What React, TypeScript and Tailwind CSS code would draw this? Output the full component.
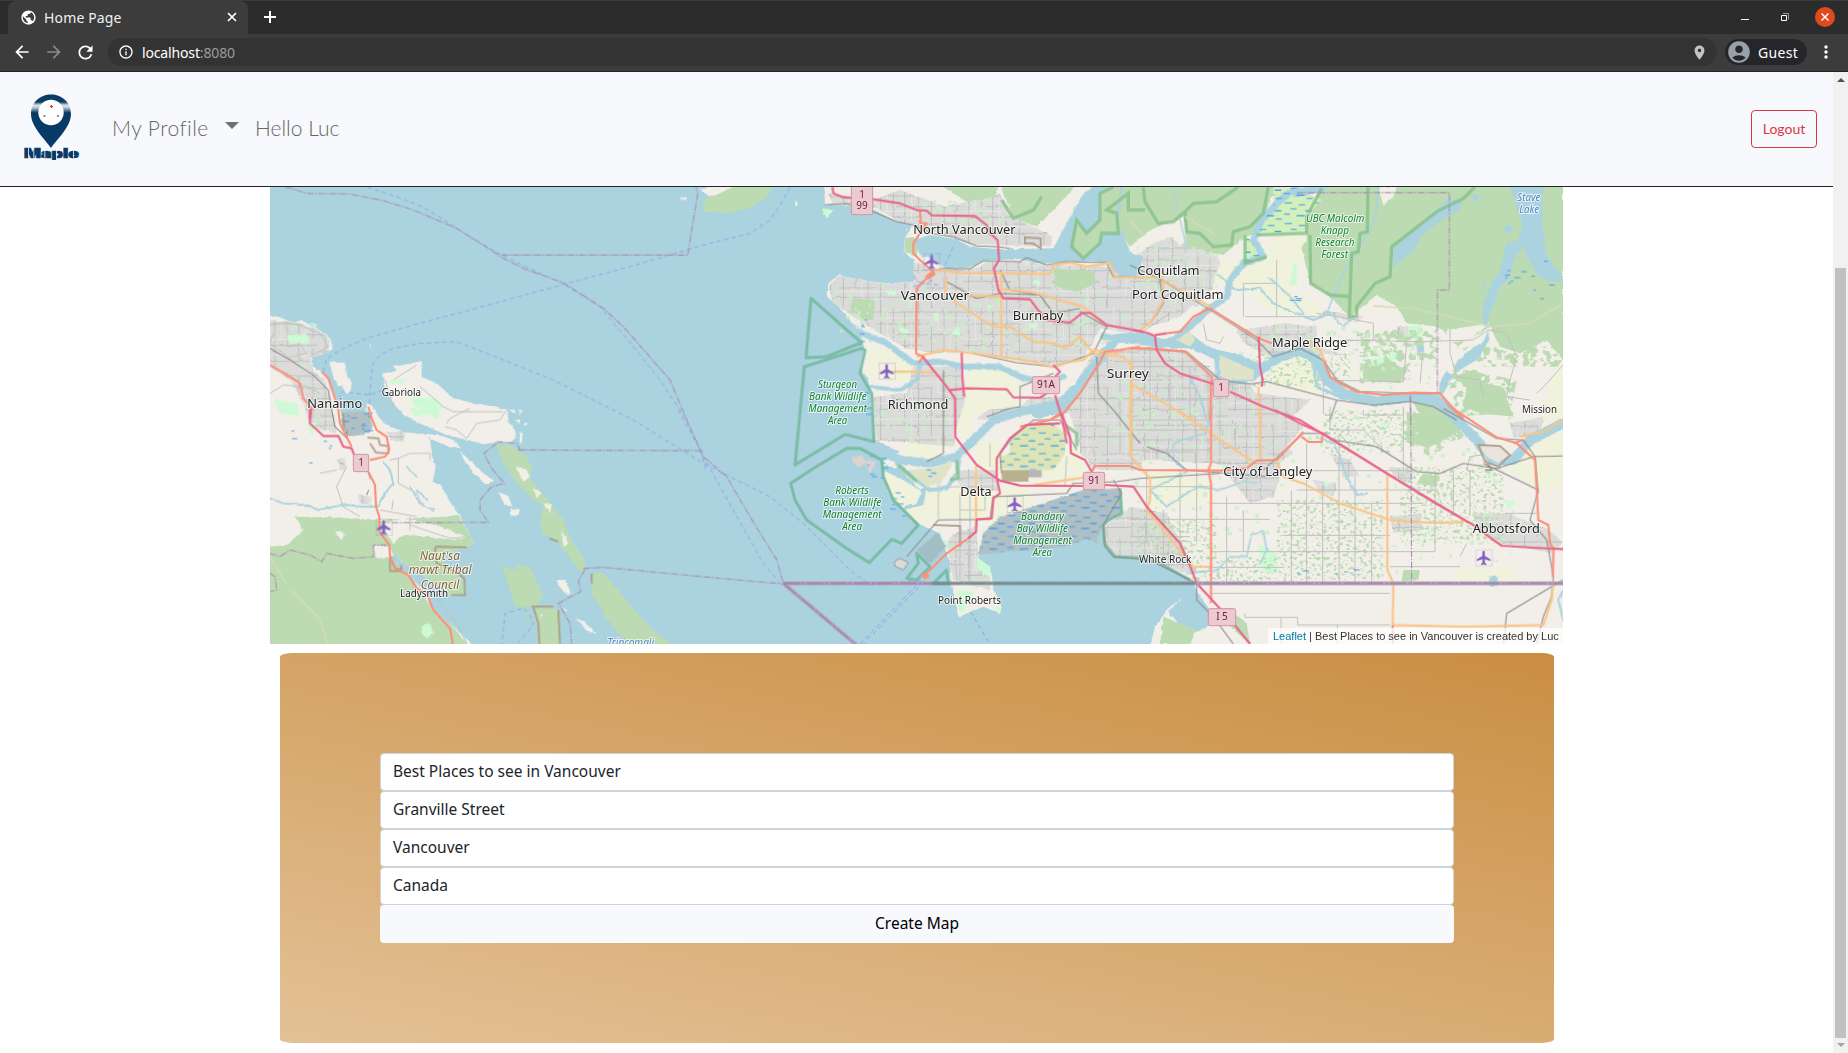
import React from "react";
import { MdFlight, MdLocationOn, MdAccountCircle, MdPublic, MdArrowBack, MdArrowForward, MdRefresh, MdInfoOutline, MdMoreVert } from "react-icons/md";

const WATER = "#aad3df";
const LAND = "#f2efe9";
const FOREST = "#bcdbb3";
const FARM = "#f0f2db";
const GRASS = "#cdfad5";
const MOTOR = "#e8678a";
const TRUNK = "#fb917b";
const PRIMARY = "#f9c586";
const BORDER = "#ab8faf";

type Tile = "A" | "B" | "C" | "D" | "E" | "F";
const ORIGIN: Record<Tile, [number, number]> = {
  A: [0, 0],
  B: [0, 690],
  C: [1290, 0],
  D: [1290, 690],
  E: [2580, 0],
  F: [2580, 690],
};

type Shape = [Tile, string];

function Paths({ items, ...rest }: { items: Shape[] } & React.SVGProps<SVGGElement>) {
  return (
    <g {...rest}>
      {items.map(([t, d], i) => (
        <path key={i} d={d} transform={`translate(${ORIGIN[t][0]} ${ORIGIN[t][1]})`} />
      ))}
    </g>
  );
}

const land: Shape[] = [
  ["B", "M-10 -288L30 -278L70 -262L95 -270L130 -250L160 -235L182 -215L188 -182L150 -165L125 -160L130 -130L155 -115L175 -90L190 -50L205 -20L215 10L215 50L235 78L285 72L310 50L300 20L290 0L290 -20L310 -10L325 20L350 45L400 66L460 72L480 90L487 140L497 168L488 215L515 228L540 275L570 320L595 365L612 400L590 412L530 430L520 460L560 490L585 520L587 555L550 560L510 535L470 500L430 480L400 460L375 432L365 445L400 480L430 510L470 550L490 600L540 640L615 710L-10 710Z"],
  ["A", "M178 545L225 548L232 590L245 610L240 640L225 640L215 615L205 620L190 590Z"],
  ["A", "M340 580L380 572L370 560L400 555L455 543L455 590L500 610L550 655L610 670L680 680L710 690L718 730L735 750L735 775L720 788L690 785L640 792L585 778L530 765L460 735L400 705L370 670L345 630Z"],
  ["B", "M455 75L500 72L550 90L572 115L540 112Z M568 122L600 150L640 190L672 212L650 222L615 195L585 155Z M685 245L715 258L727 290L705 285Z M722 295L748 297L745 315L722 318Z M750 65L758 70L755 102L748 95Z M860 510L885 510L903 552L885 550L865 525Z M915 620L940 635L980 670L950 662Z M880 592L895 605L885 603Z M735 30L750 28L748 40Z M758 40L772 38L768 48Z"],
  ["A", "M715 690L735 688L735 700Z M745 690L755 690L750 705Z M298 495L302 490L302 505Z M1230 52L1250 52L1248 60L1232 58Z"],
  ["C", "M372 15L375 75L420 72L470 75L520 90L580 120L640 130L615 175L610 215L640 240L650 280L640 305L560 310L480 300L415 285L385 310L380 345L420 385L450 420L480 455L492 500L480 560L505 600L515 690L525 780L600 815L550 845L548 880L565 940L610 990L660 1035L720 1060L750 1150L755 1210L775 1310L850 1280L900 1300L905 1280L880 1230L875 1180L835 1130L850 1060L900 1010L1000 980L1150 930L1260 930L1265 1000L1210 1030L1215 1090L1245 1130L1320 1135L1380 1150L1480 1205L1490 1235L1530 1290L1540 1330L1490 1355L1440 1335L1405 1295L1450 1250L1405 1285L1365 1340L1350 1400L2600 1400L2600 15Z"],
  ["C", "M0 30L40 15L110 15L105 45L30 50Z M285 65L290 62L290 78L284 82Z"],
];

const farm: Shape[] = [
  ["C", "M500 510L590 500L640 550L630 610L560 600L500 590Z M805 555L940 560L960 640L790 650Z M770 650L960 650L960 690L830 700L800 780L770 740Z"],
  ["D", "M545 160L600 170L700 230L830 230L890 250L870 330L720 325L660 345L600 290L565 250Z M830 100L900 90L910 210L830 160Z M1090 140L1120 110L1160 150L1140 200L1010 210L1030 170Z M900 230L980 230L1000 290L850 370L835 420Z M610 95L760 90L700 150L610 150Z"],
  ["E", "M250 240L345 250L400 210L440 170L530 170L515 240L480 330L600 400L560 410L440 400L340 330L240 300Z M270 510L380 560L370 600L280 600Z M430 560L540 520L580 600L560 640L430 610Z M0 640L60 620L200 700L0 720Z M1260 600L1299 550L1299 720L1230 720Z"],
  ["F", "M60 180L240 210L240 270L60 300Z M1130 170L1200 100L1299 60L1299 240L1220 240Z M980 480L1150 470L1160 510L990 510Z M130 60L200 60L200 120L130 130Z"],
];

const urban: Shape[] = [
  ["A", "M0 420L90 430L150 450L180 480L175 515L120 530L130 575L165 600L190 690L200 760L120 740L100 670L60 600L0 560Z"],
  ["B", "M265 255L305 260L300 285L270 280Z M350 65L405 65L400 95L360 90Z M205 145L225 145L225 180L210 180Z M400 520L450 540L520 640L490 640L440 580L400 545Z"],
  ["C", "M385 40L520 60L600 30L740 80L900 40L930 110L1000 140L1060 170L1050 200L900 195L800 190L700 155L600 125L530 85L400 75Z"],
  ["C", "M640 245L720 268L830 265L860 245L960 245L1050 255L1220 260L1300 290L1370 270L1420 230L1450 190L1500 170L1560 250L1530 330L1440 410L1290 460L1200 445L1180 490L1140 540L1060 555L930 535L800 515L700 520L620 505L520 450L400 370L385 320L415 288L560 312L645 305Z"],
  ["C", "M640 560L780 560L800 650L770 740L760 800L640 790L530 780L520 650L620 640Z"],
  ["C", "M1180 520L1250 510L1450 510L1560 590L1640 600L1680 660L1780 820L1690 880L1540 850L1330 840L1180 870L1140 800L1110 700L1030 700L830 720L860 690L960 680L1000 650L1100 650Z"],
  ["D", "M770 180L890 180L900 240L830 250L770 220Z M760 370L830 350L835 440L870 480L870 540L760 510L740 400Z M1215 350L1290 290L1400 310L1490 490L1420 480L1330 445L1245 440L1215 400Z"],
  ["D", "M1240 0L1290 30L1330 180L1200 180L1140 130L1140 30Z"],
  ["E", "M0 240L70 190L120 170L160 200L240 230L250 330L200 380L100 330L0 330Z"],
  ["E", "M320 450L400 440L460 430L560 440L680 460L700 530L560 520L480 500L420 530L340 490Z M580 390L700 410L660 450L560 440Z M800 440L860 440L850 480L800 485Z M300 630L540 660L480 720L300 720Z"],
  ["F", "M270 60L370 10L460 -10L520 50L450 130L450 200L430 260L360 280L290 190Z M600 130L660 150L690 200L640 200Z M780 170L850 180L840 220L790 200Z M780 320L870 310L880 360L790 370Z M1030 310L1130 310L1260 360L1299 400L1260 430L1120 400L1040 360Z M1140 40L1240 20L1230 80L1150 80Z M550 210L620 220L610 260L560 240Z"],
];

const forest: Shape[] = [
  ["B", "M-10 410L50 405L100 360L75 320L190 322L325 330L565 318L595 365L612 400L590 412L530 430L520 460L560 490L585 520L587 555L550 560L510 535L470 500L430 480L400 460L375 432L365 445L400 480L430 510L450 540L490 600L540 640L600 710L-10 710Z"],
  ["B", "M680 105L720 103L770 140L785 170L780 205L830 265L880 330L905 390L945 450L945 480L925 480L890 430L860 395L820 370L810 340L820 285L790 270L740 220L700 160Z M965 490L1000 490L1060 560L1110 620L1160 670L1210 710L1080 710L1020 640L965 550Z M695 465L740 482L740 458L780 475L820 560L800 590L735 592L720 540Z M785 590L850 590L870 610L872 710L805 710L800 640Z M765 590L785 625L775 630Z"],
  ["A", "M1300 95L1298 65L1325 45L1340 95Z"],
  ["C", "M10 60L60 40L110 15L225 15L200 50L150 85L90 100L20 95Z M615 175L640 170L655 190L650 230L612 215Z M1060 265L1180 275L1190 310L1130 335L1065 320Z M455 355L525 360L520 420L490 418L450 390Z M720 15L900 15L880 50L800 65Z M900 15L940 115L1010 140L1060 90L1130 15Z"],
  ["E", "M-120 15L-125 80L-175 130L-180 210L-110 235L-60 170L-30 160L0 200L60 150L160 110L170 200L280 225L345 170L380 160L430 40L430 15Z"],
  ["E", "M575 15L530 110L530 175L515 200L540 310L600 350L660 410L740 345L800 380L830 430L930 440L980 500L1080 440L1110 500L1170 520L1250 480L1299 540L1299 15Z"],
  ["E", "M700 550L780 540L830 570L810 610L700 600Z M960 590L1010 620L1000 680L1050 700L1150 710L1120 620L1060 610L1040 570Z M830 640L870 700L950 700L900 650Z"],
  ["F", "M830 10L950 10L1000 60L900 110L830 100Z M880 190L930 200L920 230L860 220Z M820 480L870 480L865 510L815 515Z M100 620L200 660L180 702L90 702Z M290 590L350 640L360 702L300 650Z"],
];

const clearings: Shape[] = [
  ["B", "M195 365L215 362L225 375L210 390Z M310 405L360 410L370 440L320 445Z M345 340L400 325L500 345L590 380L560 390L420 375L390 380L370 400L350 370Z M735 165L770 180L780 200L760 215Z M790 235L815 250L800 265Z M820 280L845 285L840 310Z M875 360L895 400L880 410Z M810 610L820 615L815 625Z"],
  ["E", "M745 21L800 21L790 50L760 75Z M560 400L690 430L760 440L700 540L560 500Z M950 450L1080 430L1010 485L950 485Z M560 315L590 335L570 350Z"],
];

const grass: Shape[] = [
  ["A", "M50 465L110 460L120 490L60 490Z M360 600L405 598L400 612L360 612Z M425 650L500 655L515 680L500 720L470 690L430 675Z M10 660L80 670L90 710L30 700Z M120 430L140 432L138 445Z"],
  ["B", "M455 645L480 640L490 670L470 685L455 670Z M420 -5L500 -5L500 30L480 10L430 20Z M110 40L140 35L125 80Z"],
  ["C", "M370 85L400 90L385 112L370 105Z M700 400L715 400L715 422L700 422Z M760 440L780 440L780 465L760 465Z M600 440L625 445L625 460L600 460Z M560 330L590 335L585 345L560 343Z M860 370L880 375L870 390Z M1000 300L1020 300L1020 315L1000 312Z M985 430L1015 430L1010 445L985 445Z"],
  ["E", "M835 438L875 436L875 480L830 480Z M700 540L770 530L820 500L800 540L720 560Z M490 250L500 250L500 315L480 315Z"],
  ["F", "M385 400L440 430L440 490L400 490Z M750 40L770 38L768 60L750 60Z M1060 190L1090 190L1080 210Z M1120 270L1160 270L1140 300Z M580 210L600 220L590 230Z"],
  ["D", "M830 440L870 470L875 510L850 490L830 470Z M720 370L745 400L735 400Z M775 540L820 545L815 565L775 560Z M770 560L800 575L790 612L776 600Z M880 590L905 592L895 612Z"],
];

const waterAreas: Shape[] = [
  ["C", "M640 180L690 165L770 178L810 200L900 208L1060 205L1110 110L1150 40L1190 15L1270 15L1255 130L1290 215L1330 230L1310 290L1260 290L1230 255L1180 243L1090 248L1000 250L960 237L900 240L850 240L810 262L740 268L700 240L660 225Z"],
  ["B", "M368 432L400 460L445 500L430 500L385 470Z"],
  ["E", "M790 200L850 150L900 110L950 60L1000 60L990 90L950 110L880 160L850 210L790 262Z"],
  ["E", "M1140 15L1240 15L1235 110L1250 230L1299 290L1290 310L1230 295L1190 230L1180 200L1150 240L1140 290L1110 320L1080 400L1072 440L1058 430L1060 370L1085 310L1110 270L1130 190L1165 180L1175 130Z M1125 135L1150 140L1145 160L1122 155Z M1060 300L1070 310L1060 335Z M1020 50L1048 40L1040 68Z M860 500L880 495L882 515L862 518Z M950 570L970 590L940 640L925 650L930 605Z M970 560L1010 515L1060 485L1075 450L1078 480L1040 540L980 575Z"],
  ["D", "M545 165L600 175L660 240L680 230L670 285L610 300L615 285L650 280L665 245L610 210L548 180Z"],
  ["F", "M1075 500L1105 500L1100 530L1080 530Z"],
];

const rivers: [Tile, string, number][] = [
  ["C", "M450 445L560 490L640 550L720 545L790 560L900 560L960 590L1040 610L1090 590", 18],
  ["C", "M500 620L600 630L650 600L660 550", 12],
  ["D", "M440 80L520 110L600 150L690 160L770 140L840 70L880 30L960 5L1080 -20L1120 -60", 26],
  ["D", "M590 160L650 210L690 240L740 235L770 190L780 140", 12],
  ["C", "M1010 700L1090 685L1120 640L1180 560L1250 475L1330 470L1380 490L1470 485", 28],
  ["E", "M-80 470L0 480L70 490L130 480L180 440L240 385L290 350L300 300L340 250L400 230L370 180L395 120L450 60L500 21", 20],
  ["E", "M130 490L180 490L260 525L330 540L390 570L450 530L510 512L560 540L590 600L650 645L740 665L840 650L920 660L970 710L1030 770L1090 840L1150 840L1200 780L1299 730", 30],
  ["E", "M180 470L260 530L265 590L300 610L370 595L390 570", 16],
  ["E", "M550 540L560 620L640 655", 10],
  ["E", "M500 40L580 21", 24],
  ["E", "M745 25L735 120L640 280L590 400", 5],
  ["E", "M265 285L320 330L390 325L430 370L500 400L550 420L600 400L640 440L670 410", 6],
  ["E", "M420 295L480 350L520 400", 6],
  ["E", "M130 21L140 80L165 180L165 220", 4],
  ["F", "M250 -10L225 70L130 100L130 150L170 185L60 240L110 290L200 230L270 240L340 215L380 220", 5],
  ["F", "M560 80L610 100L630 140L650 200L680 255L710 250", 6],
  ["F", "M170 490L260 480L300 440L350 440L365 370L400 365L410 420L390 460", 5],
  ["F", "M1299 540L1285 570L1299 630", 6],
  ["B", "M0 265L40 280L110 285L145 300L190 290L230 285L280 290L320 290L345 250L370 220L360 180L340 155", 6],
  ["B", "M420 230L450 280L490 300M440 240L470 270M410 170L440 200", 5],
  ["E", "M180 590L210 650L230 720", 6],
];

const islands: Shape[] = [
  ["D", "M630 180L720 170L750 150L755 170L720 220L680 230L650 205Z"],
  ["E", "M140 480L180 455L195 480L180 500Z M270 525L370 570L370 600L285 600L268 570Z"],
  ["C", "M1200 485L1240 478L1210 495Z"],
];

const parksOutline: Shape[] = [
  ["C", "M333 355L484 488L380 530L318 533Z"],
  ["C", "M484 505L440 520L313 560L285 855L435 763L522 785L515 640L480 580L495 510Z"],
  ["D", "M272 220L340 175L440 115L480 115L545 150L550 200L580 270L655 345L605 400L575 388L508 458L440 415L320 330L285 270Z"],
  ["D", "M650 430L655 460L620 505L650 510L690 470Z M700 520L740 480L745 520Z"],
  ["D", "M1260 235L1265 310L1225 330L1210 345L1213 400L1245 440L1320 444L1370 455L1470 510"],
];

const forestOutline: Shape[] = [
  ["C", "M905 60L940 115L1000 90L1025 50M1240 21L1200 40L1200 120L1160 160L1130 120L1115 200L1150 235L1200 190L1205 160L1255 160L1250 100L1220 90L1285 40L1285 90L1335 90"],
  ["E", "M40 21L45 65L85 130L130 125L165 95L190 70L260 65L325 21M165 95L170 155L210 160L250 200L305 195L310 155L360 140L400 100L415 21M345 165L345 250L410 230"],
  ["E", "M575 25L530 110L530 160L380 165M540 165L542 310L600 345L660 350L658 410L680 408L680 380L735 310L780 290L785 200L850 150L920 95L1000 55L1035 21M714 21L712 155L690 160L685 215L665 220L660 350"],
  ["D", "M770 150L775 205L750 210M595 165L650 215M1095 45L1130 70L1130 110"],
];

const wetland: Shape[] = [
  ["D", "M985 40L1050 35L1095 70L1095 130L1060 180L990 180L900 175L900 140L930 130L930 90Z"],
];
const marshland: Shape[] = [
  ["E", "M430 21L500 25L575 60L530 110L530 160L380 165L400 120L430 80Z M345 165L370 190L400 235L345 250Z"],
];
const mudflat: Shape[] = [
  ["D", "M850 370L900 320L1000 290L1150 240L1260 235L1265 310L1210 335L1190 400L1160 385L1100 410L835 432Z"],
];

const minor: Shape[] = [
  ["A", "M0 435L50 425L100 440L150 460L175 500L120 530M10 460L0 490L40 520L90 560M50 500L90 495L110 520L60 530M0 640L40 615L110 620L150 640M370 600L440 555M450 620L520 680L550 695L700 695M345 600L370 680"],
  ["B", "M530 40L540 25L600 -5M525 50L560 60L590 85L620 40L690 30L710 0M200 150L230 170L200 230L220 290L270 320M150 190L200 180M290 170L300 210M360 150L385 145L385 220M385 145L420 130L480 130L480 150M385 220L440 250L460 290M330 300L440 320M365 300L370 270M420 320L420 360M600 380L540 385L420 345M365 440L440 490L480 540L560 640L590 700"],
  ["E", "M0 480L60 440L120 400M340 410L340 310L440 310M440 240L440 410M345 410L560 410M220 430L230 480L270 490L280 470M560 400L620 410L680 420L730 430L730 480L560 485M640 480L860 485L1030 480L1075 450L1130 460L1160 530L1140 600L1130 650L1200 660M560 600L820 605L830 490M870 610L880 500M960 440L960 520L980 590L1050 600L1060 650M1299 555L1260 600L1220 640M580 600L580 700M1080 430L1110 450M0 720L240 720M0 560L240 560M0 600L100 600M0 660L240 660M60 510L60 720M120 560L120 720M180 560L180 720"],
  ["F", "M240 425L780 425M240 472L460 472M240 520L500 520M240 328L420 328M440 182L850 182M500 240L920 240M240 280L640 280L880 280M460 376L780 376M780 425L915 425L915 180M780 470L990 470M990 440L1010 400M484 240L484 520M530 100L530 520M578 230L578 520M627 70L627 520M675 200L675 520M725 280L725 520M820 -10L820 180M600 -10L600 60L700 60L770 130M700 0L700 15L820 15M1020 180L1020 310M970 310L970 180M240 550L780 550M345 610L345 622L503 622L503 645L780 645M622 645L622 702M453 622L453 702M1090 130L1020 140L1010 180M1125 310L1220 310M200 60L200 400M0 60L240 60M0 120L240 120M0 230L240 230M0 328L240 328M50 180L50 400M100 300L100 440M150 180L150 440M0 380L180 380M290 260L290 520M340 300L340 425"],
  ["D", "M715 325L715 180M720 230L880 230M780 250L780 510M810 250L810 520M855 240L855 300L780 300M770 370L830 370M760 420L830 420M870 100L870 170M1100 140L1095 230"],
];

const rail: Shape[] = [
  ["A", "M0 505L60 540L130 585L175 630L185 690"],
  ["B", "M185 0L195 50L232 85L230 60M290 255L296 240"],
  ["C", "M375 75L440 70L520 95L590 125L640 135L700 162L760 170L830 198L890 200L930 205M720 265L810 266L850 242L960 245L980 233L1040 255L1100 245L1220 248L1240 290L1330 292M900 270L930 330L1020 345L1060 400L1140 385M740 305L830 355L900 340L1020 345M1140 395L1220 440L1180 520L1110 545L1060 560L950 548L820 520M860 710L930 685L960 680L960 620L1060 580M1190 530L1195 640L1240 690L1320 790M730 570L730 820L680 845M1340 800L1400 820L1460 870L1700 890"],
  ["D", "M620 440L715 330L870 328L880 260L1100 250L1120 220L1250 215L1320 205L1560 190M905 190L900 130L940 80L1000 30L1080 30L1130 120M1240 210L1265 250L1210 345L1215 410L1240 440L1320 447L1370 460L1490 520L1490 570L1540 620L1600 702"],
  ["E", "M0 255L105 305L240 390L380 480L430 530L510 505L580 540L620 600L690 635L840 640L930 640L1000 715M0 505L170 515L270 600L360 612L410 605L620 660L730 675L840 665L910 680L980 720M620 660L600 720M90 300L100 370L60 430"],
  ["F", "M400 180L520 70L600 70M610 90L740 110L860 185L930 190L1000 160L1100 175L1210 140L1299 138M1060 160L1225 240L1200 330L1250 390L1270 500L1265 560L1240 620L1220 702M940 -5L1100 85L1180 90L1215 140L1225 250M1299 510L1130 610L1120 702"],
];

const primary: Shape[] = [
  ["C", "M700 270L780 278L1050 282L1060 255L1110 248L1160 260L1230 248L1245 292L1390 292M903 275L903 530M905 328L990 335L1060 355L1150 380L1220 435M740 290L735 340L900 350M760 362L880 440L930 440L1000 485L1060 490L1095 505L1140 470L1180 520L1270 530L1295 560L1292 830M575 575L640 575L700 578M650 530L730 510L820 520L900 530L1000 545L1060 562L1110 545L1150 540L1180 510L1255 520"],
  ["D", "M828 170L828 350M1000 225L1100 210L1150 203M1292 0L1292 140L1350 205L1350 270L1340 300L1480 470L1530 470"],
  ["E", "M5 540L0 720M0 610L190 720M240 380L100 300L100 360L60 430L30 450M540 490L570 510L585 545M385 620L390 720"],
  ["F", "M140 0L240 70L370 155M390 0L390 150M440 155L460 200L520 220L630 280L780 330L900 338L1000 337M772 190L772 480L790 520L788 645L1000 650L1240 645L1265 570L1270 510M1299 30L1240 65L1170 80"],
];

const trunk: Shape[] = [
  ["A", "M0 555L60 590L90 610L100 655L125 685L120 715M155 575L175 595L190 640L205 690M295 680L305 720"],
  ["B", "M205 0L210 40L232 85L245 110M305 25L320 60L350 80L358 120L345 140L300 150M295 185L315 225L318 290L328 320L328 365L358 405L360 440L375 475L415 495L440 535L470 550L490 600L540 655L550 710"],
  ["C", "M660 90L662 130L680 130L640 190L640 220L660 240L700 275L650 325L648 520L670 530L655 550"],
  ["D", "M805 385L740 430L670 500M1175 185L1185 168L1290 168M960 50L1050 30L1080 10"],
  ["C", "M1320 500L1260 510L1215 515L1200 545L1140 640L1090 700L1060 715"],
  ["E", "M240 720L245 590L165 515L60 505L0 505M110 460L150 455L190 410L240 385L385 475L425 490M580 540L600 590L630 610L680 635L760 645L850 638L930 640L960 680L1000 715"],
  ["F", "M243 -90L243 160L235 180L243 220L243 580M0 168L30 180L270 182L350 175L380 152L440 150L520 65M515 80L535 96L575 96L578 70M960 -10L1100 82L1160 100L1215 150L1225 330L1255 345L1260 400L1270 415L1268 500M788 645L788 702M1150 100L1180 90"],
];

const motor: Shape[] = [
  ["A", "M122 685L120 715"],
  ["B", "M120 0L120 40L160 78L205 78L220 110L245 115L252 135"],
  ["C", "M398 21L400 40L430 52L520 58L600 70L650 90L680 92L695 106L825 108L860 135L870 160L893 180L897 240L882 265L895 330L910 355L990 358L1010 385L1040 420L1110 428L1145 400L1170 398L1220 435L1330 455M785 518L787 590L792 650M668 530L740 620L765 655L766 770M750 630L800 625L920 628L940 652L1020 653L1040 640M1060 555L1080 575L1065 590M1065 645L1088 720L1100 790"],
  ["D", "M765 80L830 165L900 212L960 227L1150 228M1215 225L1300 230L1340 290L1440 400L1475 480L1490 520L1600 640L1650 702M1085 10L1110 80L1113 130L1155 150L1175 185M1080 40L980 45L930 85L890 145L890 205L900 250L880 265L875 325L830 328L828 365L805 385"],
  ["E", "M10 450L50 458L75 468L80 510L105 550L150 580L250 612M75 465L110 460M300 635L400 680L510 720L770 880L1020 1030M386 470L390 560L398 600L395 620"],
  ["F", "M435 0L520 45L578 70L770 190L900 270L1030 345L1070 375L1115 407L1210 413L1299 417"],
];

const ferry: Shape[] = [
  ["A", "M292 22L380 50L460 82L520 118L600 172L700 228L800 275L880 312L990 380L1010 405L1090 500L1170 600L1210 660L1250 720L1300 830L1440 1080L1480 1150L1530 1210M160 575L170 535L220 505L290 475L430 435L600 390L800 335L930 300L1080 260L1250 210L1320 190L1440 160L1500 120L1540 60L1560 21M298 670L302 600L310 550L330 525L370 505L450 490L560 485L650 520L850 600L1090 720L1300 850L1500 950L1600 1030L1740 1170L1800 1215L1950 1200M200 680L215 635L300 645L340 630"],
  ["B", "M1225 0L1290 120L1310 185M695 710L705 610L760 595L775 610L790 640L770 670L740 702"],
  ["D", "M665 510L480 702M672 515L490 702M812 605L865 695"],
  ["C", "M735 255L765 190M640 290L660 310L720 315M640 320L700 300"],
];

const boundary: Shape[] = [
  ["A", "M48 21L110 40L240 42L340 62L430 90L560 145L640 195L700 235L760 265L880 308L1000 385L1060 440L1130 520L1200 600L1250 720L1300 830L1370 890L1440 1010L1520 1140L1540 1210M695 225L1253 225L1283 40L1278 21"],
  ["B", "M745 120L1300 122M680 95L740 100L750 120M680 100L642 130L665 175L703 220L665 230L630 270L630 300L655 337L360 338M940 475L1000 472L1320 502L1540 522M945 478L925 515L932 545L865 580L900 640L905 700M0 430L30 440L60 420L120 435L155 455L170 430L250 445L310 440L310 405L355 405M0 490L15 500L20 540L0 545"],
  ["E", "M500 38L958 38L958 330L922 330L922 640M840 645L842 720"],
  ["F", "M842 -40L845 520"],
];

const reserves: Shape[] = [
  ["B", "M495 410L590 412M495 412L500 460L550 480L583 505L585 555L545 555M360 438L375 475L395 480L393 465M360 440L360 483L395 483M292 83L325 85L330 105L355 108L355 130L318 128L300 100M785 590L850 590M790 592L805 640L808 702M865 600L870 702M965 490L965 520M220 10L222 60M838 385L865 395"],
  ["C", "M975 172L1022 175L1022 205L1000 190L975 190Z"],
  ["F", "M1045 105L1110 108L1140 135L1105 170L1065 155Z M1065 150L1085 180L1065 180"],
  ["D", "M700 345L780 348L780 410"],
];

function seq(seed: number) {
  let s = seed;
  return () => {
    s = (s * 16807) % 2147483647;
    return s / 2147483647;
  };
}

const dashes = (() => {
  const r = seq(41);
  const boxes: [Tile, number, number, number, number, number][] = [
    ["B", 218, 8, 80, 65, 14],
    ["E", 475, 290, 30, 80, 5],
    ["E", 1120, 200, 150, 160, 12],
    ["B", 60, 60, 130, 110, 6],
    ["C", 455, 410, 40, 100, 6],
    ["C", 495, 600, 20, 110, 7],
    ["D", 500, 130, 50, 90, 8],
    ["D", 560, 240, 50, 80, 7],
    ["F", 500, 480, 180, 12, 6],
    ["D", 610, 170, 90, 30, 4],
  ];
  return boxes.flatMap(([t, x, y, w, h, n]) =>
    Array.from({ length: n }, () => {
      const dx = x + r() * w;
      const dy = y + r() * h;
      return [t, `M${dx.toFixed(0)} ${dy.toFixed(0)}h${(6 + r() * 14).toFixed(0)}`] as Shape;
    })
  );
})();

const speckles = (() => {
  const r = seq(977);
  const zones: [Tile, number, number, number, number, number][] = [
    ["C", 420, 340, 740, 160, 130],
    ["C", 540, 650, 200, 130, 40],
    ["C", 1200, 560, 370, 280, 110],
    ["C", 600, 60, 320, 90, 60],
    ["E", 20, 190, 240, 150, 50],
    ["E", 320, 430, 380, 90, 40],
    ["F", 0, 0, 460, 400, 110],
    ["F", 460, 10, 700, 470, 80],
    ["E", 700, 440, 220, 180, 30],
  ];
  return zones.flatMap(([t, x, y, w, h, n]) =>
    Array.from({ length: n }, () => {
      const a = 4 + r() * 10;
      const b = 4 + r() * 10;
      return [t, `M${(x + r() * w).toFixed(0)} ${(y + r() * h).toFixed(0)}h${a.toFixed(0)}v${b.toFixed(0)}h-${a.toFixed(0)}z`] as Shape;
    })
  );
})();

type Label = [Tile, string, number, number, number, number];
const towns: Label[] = [
  ["A", "Nanaimo", 112, 277, 685, 40],
  ["A", "Gabriola", 335, 453, 648, 30],
  ["B", "Ladysmith", 390, 534, 560, 30],
  ["C", "North Vancouver", 640, 947, 161, 40],
  ["C", "Vancouver", 602, 808, 361, 40],
  ["C", "Burnaby", 938, 1090, 420, 40],
  ["C", "Richmond", 563, 745, 688, 40],
  ["C", "Surrey", 1220, 1347, 595, 40],
  ["D", "Delta", 781, 875, 259, 40],
  ["D", "Point Roberts", 714, 903, 583, 30],
  ["E", "Coquitlam", 22, 209, 284, 40],
  ["E", "Port Coquitlam", 6, 281, 357, 40],
  ["E", "Maple Ridge", 426, 652, 500, 40],
  ["E", "Mission", 1176, 1281, 698, 30],
  ["F", "City of Langley", 280, 547, 197, 40],
  ["F", "White Rock", 27, 184, 460, 30],
  ["F", "Abbotsford", 1028, 1230, 369, 40],
];
const reservesNames: Label[] = [
  ["C", "Sturgeon", 354, 471, 623, 30],
  ["C", "Bank Wildlife", 327, 500, 659, 30],
  ["C", "Management", 325, 501, 695, 30],
  ["C", "Area", 384, 442, 731, 30],
  ["D", "Roberts", 406, 506, 251, 30],
  ["D", "Bank Wildlife", 370, 544, 287, 30],
  ["D", "Management", 368, 545, 323, 30],
  ["D", "Area", 427, 486, 359, 30],
  ["D", "Boundary", 963, 1092, 329, 30],
  ["D", "Bay Wildlife", 950, 1104, 365, 30],
  ["D", "Management", 940, 1115, 401, 30],
  ["D", "Area", 998, 1056, 437, 30],
  ["E", "UBC Malcolm", 528, 703, 127, 30],
  ["E", "Knapp", 572, 657, 163, 30],
  ["E", "Research", 556, 673, 199, 30],
  ["E", "Forest", 574, 654, 235, 30],
];
const waterNames: Label[] = [
  ["E", "Stave", 1162, 1231, 63, 30],
  ["E", "Lake", 1168, 1227, 98, 30],
  ["B", "Trincomali", 1012, 1152, 707, 30],
];
const tribal: Label[] = [
  ["B", "Naut'sa", 449, 570, 450, 36],
  ["B", "mawt Tribal", 416, 605, 493, 36],
  ["B", "Council", 452, 568, 536, 36],
];

function Labels({ items, fill, italic }: { items: Label[]; fill: string; italic?: boolean }) {
  return (
    <g fill={fill} stroke="#ffffff" strokeOpacity=".7" strokeWidth="6" strokeLinejoin="round" fontFamily='"Noto Sans", sans-serif' fontStyle={italic ? "italic" : "normal"} style={{ paintOrder: "stroke" }}>
      {items.map(([t, s, x1, x2, y, size], i) => (
        <text key={i} x={ORIGIN[t][0] + x1} y={ORIGIN[t][1] + y} textLength={x2 - x1} lengthAdjust="spacingAndGlyphs" fontSize={size}>
          {s}
        </text>
      ))}
    </g>
  );
}

const shields: [Tile, number, number, number, number, string[]][] = [
  ["B", 250, 133, 46, 52, ["1"]],
  ["C", 454, 8, 64, 96, ["1", "99"]],
  ["C", 997, 590, 82, 51, ["91A"]],
  ["D", 1150, 187, 64, 52, ["91"]],
  ["E", 250, 598, 46, 52, ["1"]],
  ["F", 235, 596, 82, 51, ["I 5"]],
];

const airports: [Tile, number, number][] = [
  ["C", 696, 245],
  ["C", 561, 574],
  ["B", 342, 352],
  ["D", 945, 283],
  ["F", 1062, 444],
];

function MapView() {
  return (
    <svg className="block h-full w-full" viewBox="0 21 3879 1371" preserveAspectRatio="none">
      <defs>
        <pattern id="streets" width="264" height="192" patternUnits="userSpaceOnUse">
          <rect width="264" height="192" fill="#dbdbda" />
          <path d="M0 12H264M0 48H170M60 80H264M0 112H140M150 132H264M0 160H264M14 0V192M52 0V112M86 12V160M128 0V90M128 120V192M166 48V192M204 0V132M240 12V192" fill="none" stroke="#bdbdbd" strokeWidth="2.8" />
          <path d="M0 30H264M0 94H120M180 64H264M0 142H264M34 12V94M106 48V192M186 0V64M222 80V160" fill="none" stroke="#e9e9e9" strokeWidth="2.4" />
          <path d="M64 52h14v11h-14zM14 118h14v10h-14zM210 20h12v14h-12zM140 140h16v9h-16zM172 90h10v12h-10zM92 166h12v12h-12z" fill="#cbeccb" />
        </pattern>
        <pattern id="marsh" width="92" height="62" patternUnits="userSpaceOnUse">
          <path d="M4 6.500h22M46 12.500h20M22 24.500h18M66 30.500h20M2 40.500h18M40 45.500h24M70 55.500h18" stroke="#3496f5" strokeWidth="3.4" />
        </pattern>
        <filter id="rough" x="-2%" y="-2%" width="104%" height="104%">
          <feTurbulence type="fractalNoise" baseFrequency=".06" numOctaves="3" seed="4" result="n" />
          <feDisplacementMap in="SourceGraphic" in2="n" scale="9" xChannelSelector="R" yChannelSelector="G" />
        </filter>
        <filter id="woods" x="0" y="0" width="100%" height="100%">
          <feTurbulence type="fractalNoise" baseFrequency=".1" numOctaves="4" seed="23" result="n" />
          <feColorMatrix in="n" type="matrix" values="0 0 0 0 0  0 0 0 0 0  0 0 0 0 0  0 20 0 0 -11.6" result="m" />
          <feComposite in="SourceGraphic" in2="m" operator="in" />
        </filter>
        <filter id="woodsDense" x="0" y="0" width="100%" height="100%">
          <feTurbulence type="fractalNoise" baseFrequency=".05" numOctaves="4" seed="8" result="n" />
          <feColorMatrix in="n" type="matrix" values="0 0 0 0 0  0 0 0 0 0  0 0 0 0 0  0 24 0 0 -11.9" result="m" />
          <feComposite in="SourceGraphic" in2="m" operator="in" />
        </filter>
      </defs>
      <rect y="0" width="3880" height="1400" fill={WATER} />
      <g filter="url(#rough)">
        <Paths items={land} fill={LAND} />
        <Paths items={farm} fill={FARM} />
        <Paths items={urban} fill="url(#streets)" />
        <Paths items={forest} fill={FOREST} />
        <Paths items={clearings} fill={LAND} />
        <Paths items={grass} fill={GRASS} />
      </g>
      <g fill={FOREST} filter="url(#woodsDense)">
        <path d="M3270 530H3420V610H3270Z M3400 690L3560 690L3600 760L3480 830L3400 780Z M3540 560L3740 600L3720 700L3540 710Z M3260 450H3500V540H3260Z M3560 500H3879V560H3640Z" />
      </g>
      <g fill={FOREST} filter="url(#woods)">
        <path d="M3020 960H3340V1200H3020Z M3390 860H3700V1090H3390Z M2760 1130H3080V1210H2760Z M2940 520H3240V620H2940Z M2600 1020H2840V1140H2600Z M3160 690H3400V820H3160Z" />
      </g>
      <Paths items={speckles} fill="#cbeec8" opacity=".9" />
      <Paths items={minor} fill="none" stroke="#c0c0c1" strokeWidth="3" />
      <Paths items={wetland} fill="#dbe4af" opacity=".9" />
      <Paths items={marshland} fill="#d3efbb" />
      <Paths items={[["D", "M905 180H985V215H905Z"]]} fill="#b9b18d" />
      <Paths items={[["D", "M985 180H1025V202H985Z"]]} fill="#b6b6b2" />
      <g filter="url(#rough)">
        <Paths items={waterAreas} fill={WATER} />
        <g fill="none" stroke={WATER} strokeLinejoin="round" strokeLinecap="round">
          {rivers.map(([t, d, w], i) => (
            <path key={i} d={d} strokeWidth={w} transform={`translate(${ORIGIN[t][0]} ${ORIGIN[t][1]})`} />
          ))}
        </g>
        <Paths items={[["C", "M1115 200L1130 120L1160 160L1200 120L1200 40L1240 15L1262 20L1250 100L1255 160L1205 162L1200 190L1150 235Z"]]} fill={FOREST} />
        <Paths items={islands} fill="#dfe3c8" />
        <Paths items={[...mudflat, ["B", "M213 5L280 5L300 20L305 60L280 75L235 78L218 50Z"]]} fill="#b0bfc3" />
        <Paths items={[["D", "M455 140L485 138L500 155L480 172L460 160Z M500 152L530 155L510 190L498 170Z"]]} fill="#ddd2cf" />
        <Paths items={[["F", "M1045 105L1110 108L1140 135L1105 160L1070 140Z"]]} fill="#eae3db" />
        <Paths items={[["D", "M650 420L710 370L740 410L690 460Z"]]} fill="#a2bdc4" />
      </g>
      <Paths items={[...mudflat, ...wetland, ...marshland]} fill="url(#marsh)" />
      <Paths items={dashes} stroke="#4b9fec" strokeWidth="3" />
      <Paths items={forestOutline} fill="none" stroke="#86c08a" strokeWidth="10" opacity=".8" />
      <Paths items={parksOutline} fill="none" stroke="#76b9a0" strokeWidth="9" strokeLinejoin="round" opacity=".9" />
      <Paths items={reserves} fill="none" stroke="#a99282" strokeWidth="6" opacity=".8" />
      <Paths items={[["B", "M0 440L50 525M65 540L150 630L172 702"], ["E", "M165 110L250 160M0 120L40 165M730 378L850 385L1000 420L1080 440L1200 430L1299 370"]]} fill="none" stroke="#d3ddb2" strokeWidth="5" />
      <Paths items={rail} fill="none" stroke="#8a8a8a" strokeWidth="3.2" strokeLinejoin="round" />
      <Paths items={primary} fill="none" stroke={PRIMARY} strokeWidth="6.5" strokeLinejoin="round" />
      <Paths items={trunk} fill="none" stroke={TRUNK} strokeWidth="6.5" strokeLinejoin="round" />
      <Paths items={motor} fill="none" stroke={MOTOR} strokeWidth="6.5" strokeLinejoin="round" />
      <Paths items={[["D", "M662 495L680 490L688 498L675 508Z"], ["C", "M675 290L700 272L706 284L685 298Z"]]} fill={TRUNK} stroke={TRUNK} strokeWidth="3" />
      <Paths items={[["D", "M583 455L600 445L625 458L610 480L585 468Z"]]} fill="#dcdad9" stroke="#8d8d8d" strokeWidth="2.5" />
      <Paths items={ferry} fill="none" stroke="#8ba4ea" strokeWidth="3" strokeDasharray="13 10" />
      <Paths items={boundary} fill="none" stroke={BORDER} strokeWidth="3.4" strokeDasharray="20 4 5 4" />
      <g fill="none">
        <path d="M1540 1210H1985M2775 1210H3880M1540 1210L1765 1400" stroke="#b49bbd" strokeWidth="12" opacity=".9" />
        <path d="M1985 1210H2775" stroke="#6f9089" strokeWidth="11" opacity=".85" />
        <path d="M1540 1210H3880M1540 1210L1765 1400" stroke="#8f7197" strokeWidth="3" strokeDasharray="50 6 8 6" />
      </g>
      {airports.map(([t, x, y], i) => (
        <MdFlight key={i} x={ORIGIN[t][0] + x - 25} y={ORIGIN[t][1] + y - 25} size={50} color="#8461c4" stroke="#8461c4" strokeWidth=".6" />
      ))}
      <Labels items={towns} fill="#222222" />
      <Labels items={reservesNames} fill="#128030" italic />
      <Labels items={waterNames} fill="#5083c0" italic />
      <Labels items={tribal} fill="#80633c" italic />
      {shields.map(([t, x, y, w, h, lines], i) => (
        <g key={i} transform={`translate(${ORIGIN[t][0] + x} ${ORIGIN[t][1] + y})`} fontFamily='"Noto Sans", sans-serif' fontSize="30" fill="#6d1c3b" textAnchor="middle">
          <rect width={w} height={h} rx="5" fill="#ebcad1" stroke="#d294a2" strokeWidth="3" />
          {lines.map((l, k) => (
            <text key={k} x={w / 2} y={(lines.length === 1 ? h / 2 : 35 + k * 35) + 10}>
              {l}
            </text>
          ))}
        </g>
      ))}
    </svg>
  );
}

function Logo() {
  return (
    <svg className="mt-[-2px] h-[66px] w-[57px]" viewBox="0 0 57 66">
      <defs>
        <linearGradient id="pin" x1="0" y1="0" x2="0" y2="1">
          <stop offset="0" stopColor="#073a63" />
          <stop offset=".14" stopColor="#0d4068" />
          <stop offset=".2" stopColor="#d9e2ea" />
          <stop offset=".24" stopColor="#c3cfdb" />
          <stop offset=".34" stopColor="#073a66" />
          <stop offset="1" stopColor="#073a66" />
        </linearGradient>
      </defs>
      <path d="M28 .5C17 .5 8 8.5 8 20C8 33 22 45 28 54C34 45 48 33 48 20C48 8.500 39 .5 28 .5Z" fill="url(#pin)" />
      <circle cx="28" cy="18.500" r="12.700" fill="#fff" />
      <path d="M27 12.500h3M28.500 11v3" stroke="#e02535" strokeWidth="1.200" />
      <circle cx="21.500" cy="22" r="1.100" fill="#777" />
      <circle cx="35" cy="22" r="1.100" fill="#777" />
      <text x="1" y="63.500" textLength="55" lengthAdjust="spacingAndGlyphs" fontFamily="Inter, sans-serif" fontWeight="900" fontSize="12.500" fill="#073a66" stroke="#073a66" strokeWidth=".7">
        Maple
      </text>
      <path d="M5.500 53v11M10.800 53v11M21.800 53v11M33.500 53v13M50.500 53v11" stroke="#f8f9fc" strokeWidth=".8" />
    </svg>
  );
}

const fields = ["Best Places to see in Vancouver", "Granville Street", "Vancouver", "Canada"];

export default function App() {
  return (
    <div className="flex h-[1053px] w-[1848px] flex-col overflow-hidden bg-white font-['Noto_Sans',sans-serif]">
      <div className="flex h-[34px] items-stretch border-t border-[#3a3a3a] bg-[#2c2c2c] pl-2 text-[#f0f0f0]">
        <div className="flex w-60 items-center rounded-t-lg bg-[#3c3c3c] pr-[10px] pb-px pl-3">
          <MdPublic size={17} className="text-white" />
          <span className="ml-[7px] flex-1 text-[14px] tracking-[0.15px]">Home Page</span>
          <svg className="h-3 w-3" viewBox="0 0 12 12" stroke="#fff" strokeWidth="1.7">
            <path d="M2 2l8 8M10 2l-8 8" />
          </svg>
        </div>
        <svg className="mb-px ml-4 h-3 w-3 self-center" viewBox="0 0 12 12" stroke="#fff" strokeWidth="2">
          <path d="M6 0v12M0 6h12" />
        </svg>
        <div className="ml-auto flex items-center pr-[13px] pb-px">
          <div className="mt-1 h-[1px] w-2 bg-white" />
          <svg className="ml-8 h-[9px] w-2" viewBox="0 0 8 9" fill="none">
            <path d="M.5 2.500h5v5h-5z" stroke="#fff" />
            <path d="M2 .5h5.500v6" stroke="#999" />
          </svg>
          <div className="ml-[26px] flex h-5 w-5 items-center justify-center rounded-full bg-[#e2491d]">
            <svg className="h-2 w-2" viewBox="0 0 8 8" stroke="#fff" strokeWidth="1.500">
              <path d="M.5 .5l7 7M7.500 .5l-7 7" />
            </svg>
          </div>
        </div>
      </div>
      <div className="flex h-[38px] items-center border-b border-[#232323] bg-[#3c3c3c] pb-px pl-3 text-white">
        <MdArrowBack size={20} />
        <MdArrowForward size={20} className="ml-3 text-[#8b8b8b]" />
        <MdRefresh size={21} className="ml-[11px]" />
        <div className="ml-3 flex h-7 w-[1609px] items-center rounded-full bg-[#333333] pr-[9px] pl-[10px]">
          <MdInfoOutline size={16} />
          <span className="ml-2 flex-1 text-[14px] tracking-[-0.15px]">
            localhost<span className="text-[#9b9b9b]">:8080</span>
          </span>
          <MdLocationOn size={17} className="text-[#c4c4c4]" />
        </div>
        <div className="ml-2 flex h-[26px] w-[82px] items-center rounded-full bg-[#242629] pl-px">
          <MdAccountCircle size={26} className="text-[#9aa0a9]" />
          <span className="ml-[6px] text-[14px] tracking-[0.3px]">Guest</span>
        </div>
        <MdMoreVert size={20} className="ml-[9px]" />
      </div>
      <div className="flex min-h-0 flex-1">
        <div className="flex w-[1833px] flex-col">
          <nav className="flex h-[115px] shrink-0 items-center border-b border-[#212529] bg-[#f8f9fc] pr-4 pb-[3px] pl-[23px] font-['Lato',sans-serif] font-light text-[#666]">
            <Logo />
            <span className="ml-8 w-[97px] text-[21px] tracking-[0.45px] whitespace-nowrap">My Profile</span>
            <span className="mt-[-4px] ml-4 h-0 w-0 border-x-[7px] border-t-[7px] border-x-transparent border-t-[#6f7072]" />
            <span className="ml-4 text-[21px]">Hello Luc</span>
            <button className="mt-[3px] ml-auto h-[38px] w-[66px] rounded border border-[#dc3545] pb-0.5 text-[14px] font-normal text-[#dc3545]">Logout</button>
          </nav>
          <main className="ml-[270px] w-[1294px]">
            <div className="relative h-[457px] w-[1293px] overflow-hidden">
              <MapView />
              <div className="absolute right-0 bottom-0 h-4 w-[295px] bg-white/75 pl-[5px] font-['Liberation_Sans',sans-serif] text-[11px] leading-4 whitespace-nowrap text-[#333]">
                <span className="text-[#0078a8]">Leaflet</span> | Best Places to see in Vancouver is created by Luc
              </div>
            </div>
            <form className="mx-[10px] mt-[9px] h-[390px] rounded-[1%] bg-[linear-gradient(12deg,#e3c196,#ca8e42)] p-[100px]">
              {fields.map((f) => (
                <div key={f} className="flex h-[38px] items-center rounded border border-[#ced4da] bg-white px-3 pb-px text-[15.5px] text-[#212529]">
                  {f}
                </div>
              ))}
              <button type="button" className="block h-[38px] w-full rounded bg-[#f8f9fc] pb-px text-[15.5px] text-black">
                Create Map
              </button>
            </form>
          </main>
        </div>
        <div className="flex w-[15px] flex-col items-center bg-[#f1f1f1]">
          <div className="mt-[6px] h-0 w-0 border-x-4 border-b-4 border-x-transparent border-b-[#505050]" />
          <div className="mt-[186px] h-[770px] w-[11px] bg-[#c1c1c1]" />
          <div className="mt-[5px] h-0 w-0 border-x-4 border-t-4 border-x-transparent border-t-[#a3a3a3]" />
        </div>
      </div>
    </div>
  );
}
